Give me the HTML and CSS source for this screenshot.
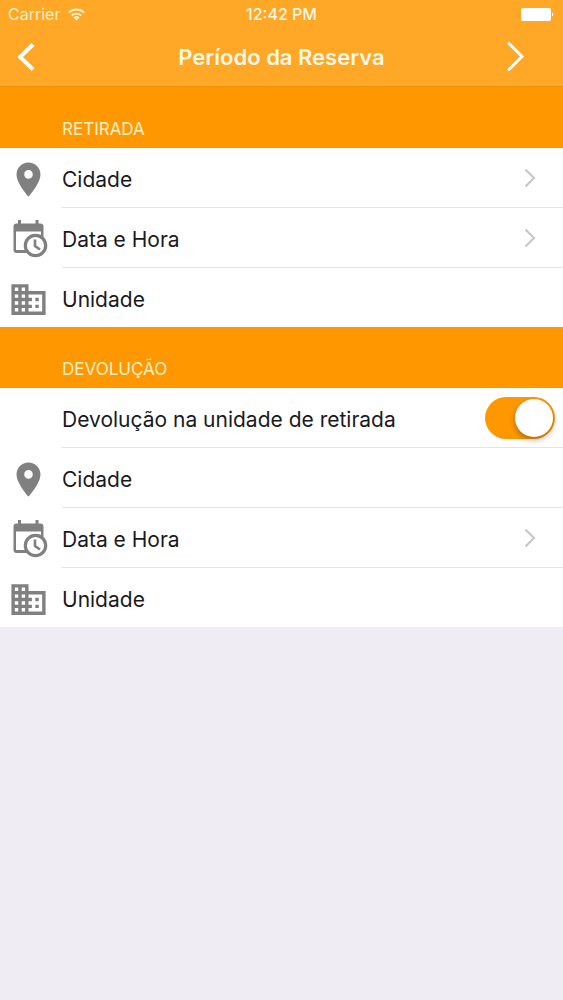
FILE: index.html
```html
<!DOCTYPE html>
<html lang="pt-BR">
<head>
    <meta charset="UTF-8">
    <meta name="viewport" content="width=device-width, initial-scale=1.0">
    <title>Período da Reserva</title>
    <link rel="stylesheet" href="styles.css">
</head>
<body>
    <!-- Shared icons -->
    <svg class="sprite" aria-hidden="true">
        <symbol id="place" viewBox="0 0 24 24">
            <path d="M12 2C8.13 2 5 5.13 5 9c0 5.25 7 13 7 13s7-7.75 7-13c0-3.87-3.13-7-7-7zm0 9.500c-1.380 0-2.500-1.120-2.500-2.500s1.120-2.500 2.500-2.500 2.500 1.120 2.500 2.500-1.120 2.500-2.500 2.500z"/>
        </symbol>
        <symbol id="calendar" viewBox="0 0 41 41">
            <path d="M10 1h3v3.500h14.500V1h3v3.500h2a3 3 0 0 1 3 3v11H33v-6H8v18.500h13v3H8.500a3 3 0 0 1-3-3v-23.500a3 3 0 0 1 3-3H10z"/>
            <circle cx="27.500" cy="26.500" r="10.200" fill="#fff" stroke="currentColor" stroke-width="3.200"/>
            <path d="M27 20.500v6.500l5 3.500" fill="none" stroke="currentColor" stroke-width="2.600"/>
        </symbol>
        <symbol id="domain" viewBox="0 0 24 24">
            <path d="M12 7V3H2v18h20V7H12zM6 19H4v-2h2v2zm0-4H4v-2h2v2zm0-4H4V9h2v2zm0-4H4V5h2v2zm4 12H8v-2h2v2zm0-4H8v-2h2v2zm0-4H8V9h2v2zm0-4H8V5h2v2zm10 12h-8v-2h2v-2h-2v-2h2v-2h-2V9h8v10zm-2-8h-2v2h2v-2zm0 4h-2v2h2v-2z"/>
        </symbol>
        <symbol id="chevron" viewBox="0 0 12 20">
            <path d="M1.500 1.500l8.500 8.500-8.500 8.500" fill="none" stroke="currentColor" stroke-width="2.200"/>
        </symbol>
    </svg>

    <header class="header">
        <div class="status-bar">
            <span class="carrier">Carrier
                <svg class="wifi" viewBox="0 0 18 13" aria-hidden="true">
                    <path d="M1 4.500a11.500 11.500 0 0 1 16 0M4 7.600a7.300 7.300 0 0 1 10 0" fill="none" stroke="currentColor" stroke-width="2"/>
                    <path d="M9 13l-3.200-3.300a4.600 4.600 0 0 1 6.400 0z" fill="currentColor"/>
                </svg>
            </span>
            <span class="time">12:42 PM</span>
            <svg class="battery" viewBox="0 0 34 13" aria-hidden="true">
                <rect width="30" height="13" rx="2" fill="currentColor"/>
                <path d="M31 4.500a2.200 2.200 0 0 1 0 4z" fill="currentColor"/>
            </svg>
        </div>
        <nav class="nav-bar">
            <button class="nav-button" type="button" aria-label="Voltar">
                <svg class="nav-icon" viewBox="0 0 20 30" aria-hidden="true">
                    <path d="M17 2.500L4 15l13 12.500" fill="none" stroke="currentColor" stroke-width="4"/>
                </svg>
            </button>
            <h1 class="title">Período da Reserva</h1>
            <button class="nav-button next" type="button" aria-label="Avançar">
                <svg class="nav-icon" viewBox="0 0 20 30" aria-hidden="true">
                    <path d="M3 1.500l13 13-13 13" fill="none" stroke="currentColor" stroke-width="3" stroke-linecap="round"/>
                </svg>
            </button>
        </nav>
    </header>

    <main>
        <section>
            <h2 class="section-title">RETIRADA</h2>
            <ul class="list">
                <li>
                    <button class="row" type="button">
                        <svg class="icon" aria-hidden="true"><use href="#place"/></svg>
                        <span class="row-body">
                            <span class="label">Cidade</span>
                            <svg class="chevron" aria-hidden="true"><use href="#chevron"/></svg>
                        </span>
                    </button>
                </li>
                <li>
                    <button class="row" type="button">
                        <svg class="icon" aria-hidden="true"><use href="#calendar"/></svg>
                        <span class="row-body">
                            <span class="label">Data e Hora</span>
                            <svg class="chevron" aria-hidden="true"><use href="#chevron"/></svg>
                        </span>
                    </button>
                </li>
                <li>
                    <button class="row" type="button">
                        <svg class="icon" aria-hidden="true"><use href="#domain"/></svg>
                        <span class="row-body">
                            <span class="label">Unidade</span>
                        </span>
                    </button>
                </li>
            </ul>
        </section>

        <section>
            <h2 class="section-title">DEVOLUÇÃO</h2>
            <ul class="list">
                <li>
                    <label class="row" for="same-unit">
                        <span class="icon"></span>
                        <span class="row-body">
                            <span class="label">Devolução na unidade de retirada</span>
                            <input class="switch" id="same-unit" type="checkbox" role="switch" checked>
                        </span>
                    </label>
                </li>
                <li>
                    <button class="row" type="button">
                        <svg class="icon" aria-hidden="true"><use href="#place"/></svg>
                        <span class="row-body">
                            <span class="label">Cidade</span>
                        </span>
                    </button>
                </li>
                <li>
                    <button class="row" type="button">
                        <svg class="icon" aria-hidden="true"><use href="#calendar"/></svg>
                        <span class="row-body">
                            <span class="label">Data e Hora</span>
                            <svg class="chevron" aria-hidden="true"><use href="#chevron"/></svg>
                        </span>
                    </button>
                </li>
                <li>
                    <button class="row" type="button">
                        <svg class="icon" aria-hidden="true"><use href="#domain"/></svg>
                        <span class="row-body">
                            <span class="label">Unidade</span>
                        </span>
                    </button>
                </li>
            </ul>
        </section>
    </main>
</body>
</html>
```

FILE: styles.css
```css
* {
    box-sizing: border-box;
}

body {
    margin: 0;
    background-color: #efedf3;
    color: #1a1a1e;
    font-family: Inter, "Liberation Sans", sans-serif;
}

.sprite {
    display: none;
}

/* Header */
.header {
    background-color: #ffa726;
    border-bottom: 1px solid #ec9412;
    color: #fff8e4;
}

.status-bar {
    display: grid;
    grid-template-columns: 1fr auto 1fr;
    align-items: center;
    height: 28px;
    padding: 0 8px;
    font-size: 16px;
}

.carrier {
    display: flex;
    align-items: center;
    gap: 8px;
    color: #fff0c8;
}

.wifi {
    width: 17px;
    height: 13px;
}

.time {
    font-weight: 500;
}

.battery {
    justify-self: end;
    width: 34px;
    height: 13px;
    color: #ffffff;
}

.nav-bar {
    display: grid;
    grid-template-columns: 1fr auto 1fr;
    align-items: center;
    height: 58px;
    padding: 0 8px;
}

.nav-button {
    display: flex;
    justify-self: start;
    padding: 8px;
    border: none;
    background: none;
    color: #ffffff;
    cursor: pointer;
}

.nav-button.next {
    justify-self: end;
    margin-right: 21px;
}

.nav-icon {
    width: 20px;
    height: 30px;
}

.title {
    margin: 0;
    font-size: 22px;
    font-weight: 600;
}

/* Sections */
.section-title {
    margin: 0;
    padding: 30px 8px 7px 62px;
    background-color: #ff9800;
    color: #fff0c8;
    font-size: 17px;
    font-weight: 400;
    line-height: 24px;
}

.list {
    margin: 0;
    padding: 0;
    list-style: none;
    background-color: #ffffff;
}

.row {
    display: flex;
    align-items: center;
    gap: 13px;
    width: 100%;
    padding: 0 0 0 8px;
    border: none;
    background: none;
    color: inherit;
    font: inherit;
    font-size: 21px;
    text-align: left;
    cursor: pointer;
}

.icon {
    flex: none;
    width: 41px;
    height: 41px;
    margin-top: 3px;
    color: #808080;
    fill: currentColor;
}

.row-body {
    display: flex;
    flex: 1;
    align-items: center;
    justify-content: space-between;
    height: 60px;
    border-bottom: 1px solid #e4e4e6;
}

li:last-child .row-body {
    height: 59px;
    border-bottom: none;
}

.label {
    padding-top: 4px;
}

.chevron {
    width: 12px;
    height: 20px;
    margin-right: 27px;
    color: #c7c7cc;
}

/* Switch */
.switch {
    appearance: none;
    width: 70px;
    height: 42px;
    margin: 0 8px 0 0;
    padding: 2px;
    border-radius: 21px;
    background-color: #d8d8dc;
    cursor: pointer;
}

.switch::before {
    content: "";
    display: block;
    width: 38px;
    height: 38px;
    border-radius: 50%;
    background-color: #ffffff;
    box-shadow: 0 3px 6px rgba(0, 0, 0, 0.3);
}

.switch:checked {
    background-color: #ff9800;
}

.switch:checked::before {
    margin-left: auto;
}
```
